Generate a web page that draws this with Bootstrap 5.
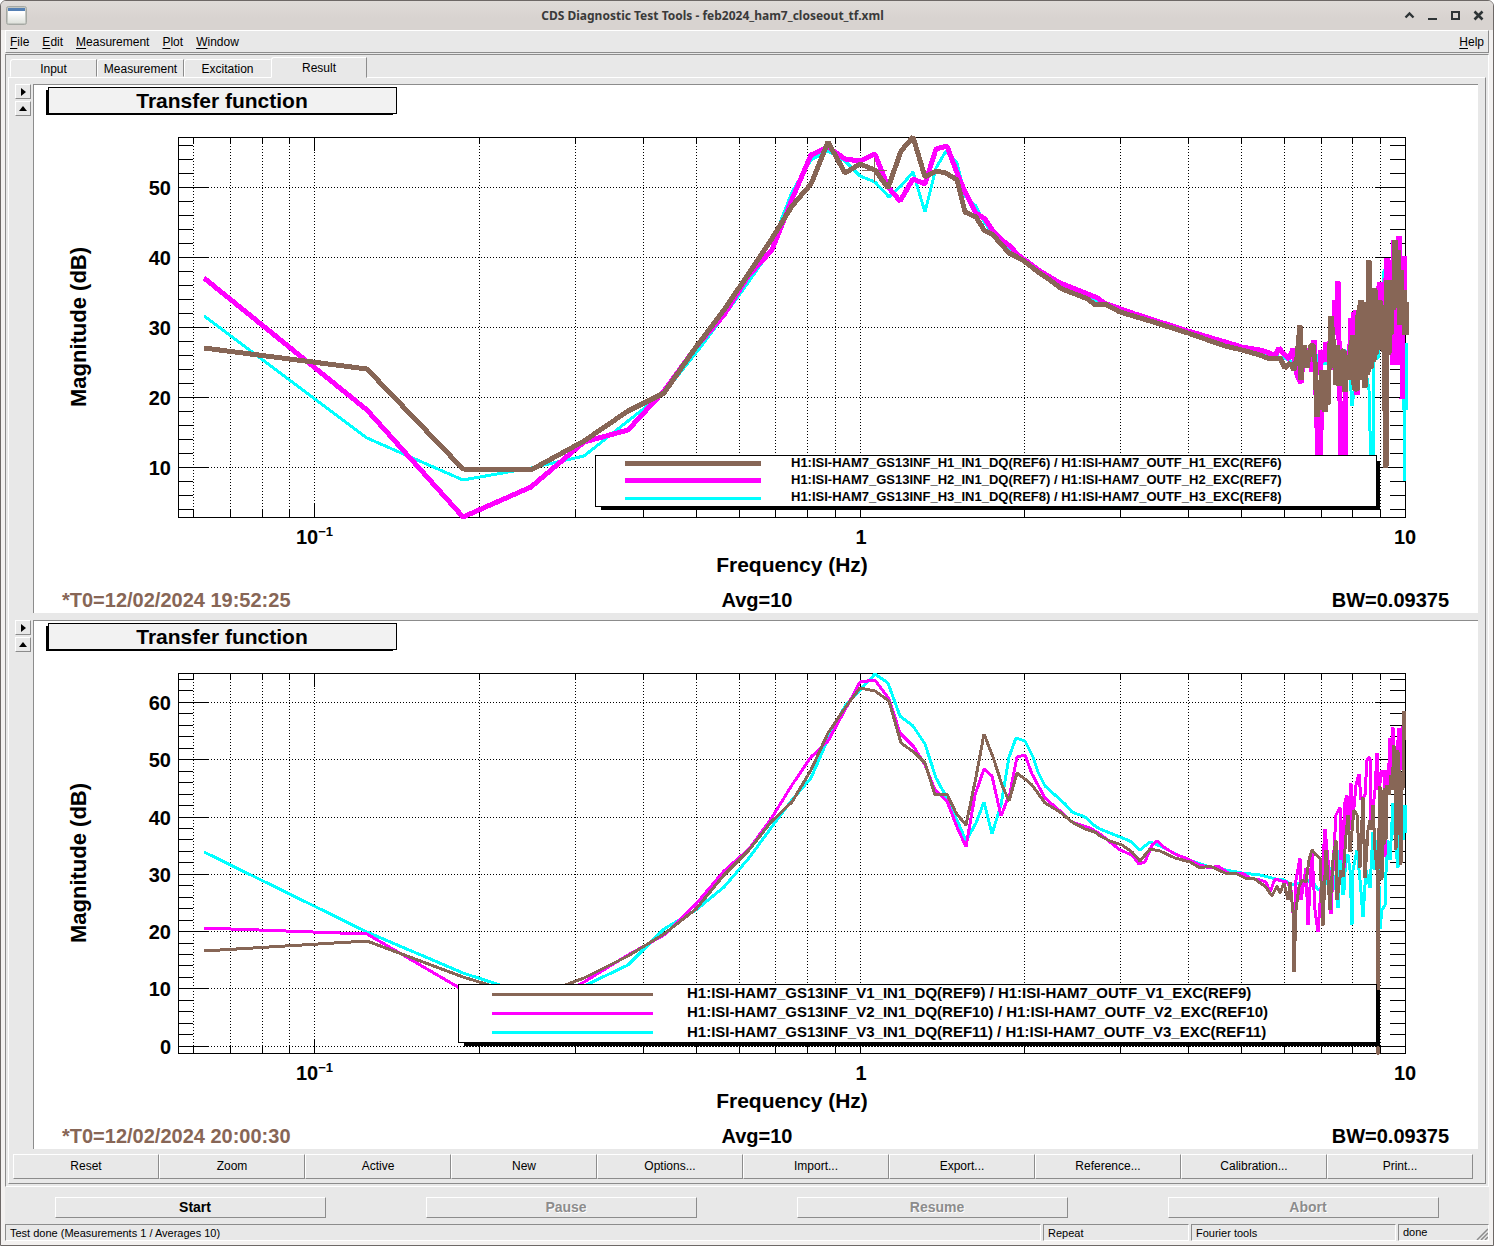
<!DOCTYPE html>
<html lang="en">
<head>
<meta charset="utf-8">
<meta name="viewport" content="width=device-width, initial-scale=1">
<title>CDS Diagnostic Test Tools</title>
<link rel="stylesheet" href="https://cdn.jsdelivr.net/npm/bootstrap@5.3.0/dist/css/bootstrap.min.css">
<style>
:root{--face:#e8e8e8;--lo:#8c8c8c;--hi:#fff}
body{font:12px/16px "Liberation Sans",Arial,sans-serif;color:#000;background:#fff}
.app-window{min-height:100vh;border:1px solid #6d6866;border-radius:6px 6px 0 0;background:#f3f1f0;overflow:hidden}
.title-bar{height:29px;background:linear-gradient(#dfdbd8,#d8d3d0 60%);padding:0 3px 0 5px;font:bold 12px/16px "Noto Sans",sans-serif;color:#3a3a3a}
.title-bar button{width:23px;height:23px;border:0;background:none;padding:0;display:grid;place-items:center}
.client{margin:0 4px 4px;background:var(--face)}
.raised{border:1px solid;border-color:var(--hi) var(--lo) var(--lo) var(--hi)}
.sunken{border:1px solid;border-color:var(--lo) var(--hi) var(--hi) var(--lo)}
.menu-row{height:23px;padding:0 4px;gap:13px}
.menu-row a{color:#000;text-decoration:none;white-space:nowrap}
.menu-row u{text-underline-offset:2px}
.work{margin-top:1px;padding:2px}
.tab-strip{height:20px;padding-left:2px;position:relative;align-items:flex-end}
.tab-strip .nav-link{border:1px solid;border-color:var(--hi) var(--lo) transparent var(--hi);border-radius:3px 0 0 0;background:var(--face);color:#000;padding:0;height:18px;width:87px;line-height:18px}
.tab-strip .nav-link.active{height:21px;width:96px;line-height:18px;border-color:var(--hi) var(--lo) var(--face) var(--hi);background:var(--face);color:#000;margin-bottom:-1px}
.tab-strip .nav-link.third{border-right-color:transparent}
.page{padding:6px 7px 4px 4px}
.plot-row{margin-bottom:7px}
.side{width:20px;padding-left:2px;gap:2px}
.side button{width:16px;height:15px;padding:0;background:var(--face);display:grid;place-items:center}
.plot-box{border-top:1px solid var(--lo);border-left:1px solid var(--lo);background:#fff;min-width:0}
.plot-box svg{display:block;width:100%;height:auto}
.plot-box text{font-family:"Liberation Sans",Arial,sans-serif;font-weight:bold;font-size:20px}
.plot-box .t21{font-size:21px}
.plot-box .t22{font-size:22px}
.plot-box .t15{font-size:15px}
.plot-box .t13{font-size:13px}
.plot-box .sup{font-size:13px}
.crisp{shape-rendering:crispEdges}
.curve{fill:none;stroke-linejoin:bevel;shape-rendering:crispEdges}
.tool-row{margin:-2px 5px 0 0}
.tool-row button{height:25px;padding:0 0 2px;background:var(--face);flex:1 1 0;color:#000}
.run-row{padding:10px 0 6px}
.run-row div{flex:1 1 0;padding:0 50px}
.run-row button{width:100%;height:21px;padding:0 0 0 9px;background:var(--face);font-weight:bold;font-size:14px;line-height:17px;color:#000}
.run-row button:disabled{color:#8c8c8c;text-shadow:1px 1px #fff}
.status-row{gap:2px;font-size:11px;line-height:16px;height:17px}
.status-row div{padding-left:4px;white-space:nowrap;overflow:hidden}
.w-rep{width:146px}.w-tool{width:205px}.w-done{width:91px}
</style>
<script src="https://cdn.jsdelivr.net/npm/bootstrap@5.3.0/dist/js/bootstrap.bundle.min.js"></script>
</head>
<body>
<div class="app-window d-flex flex-column">
  <header class="title-bar d-flex align-items-center">
    <svg width="21" height="19" viewBox="0 0 21 19"><defs><linearGradient id="wi" x2="0" y2="1"><stop offset=".3" stop-color="#fff"/><stop offset="1" stop-color="#dfe2dc"/></linearGradient></defs><rect x=".5" y=".5" width="20" height="18" rx="2" fill="#c4c7c2" stroke="#a5a8a3"/><rect x="2" y="2" width="17" height="15" fill="url(#wi)"/><rect x="2" y="2" width="17" height="3" fill="#5580b4"/></svg>
    <div class="flex-grow-1 text-center">CDS Diagnostic Test Tools - feb2024_ham7_closeout_tf.xml</div>
    <button type="button" aria-label="Shade"><svg width="11" height="11" fill="none" stroke="#2e3436" stroke-width="2.4"><path d="M1.500 7.500 5.500 3.500 9.500 7.500"/></svg></button>
    <button type="button" aria-label="Minimize"><svg width="11" height="11"><path fill="#2e3436" d="M1 8h9v2H1z"/></svg></button>
    <button type="button" aria-label="Maximize"><svg width="11" height="11"><path fill="none" stroke="#2e3436" stroke-width="2" d="M2 2h7v7H2z"/></svg></button>
    <button type="button" aria-label="Close"><svg width="11" height="11"><path stroke="#2e3436" stroke-width="2.600" d="M1.500 1.500 9.500 9.500M9.500 1.500 1.500 9.500"/></svg></button>
  </header>
  <div class="client">
    <nav class="menu-row raised d-flex align-items-center">
      <a href="#"><u>F</u>ile</a><a href="#"><u>E</u>dit</a><a href="#"><u>M</u>easurement</a><a href="#"><u>P</u>lot</a><a href="#"><u>W</u>indow</a><a href="#" class="ms-auto"><u>H</u>elp</a>
    </nav>
    <main class="work sunken">
      <div class="tab-strip nav d-flex" role="tablist">
        <button class="nav-link" type="button" role="tab">Input</button>
        <button class="nav-link" type="button" role="tab">Measurement</button>
        <button class="nav-link third" type="button" role="tab">Excitation</button>
        <button class="nav-link active" type="button" role="tab" aria-selected="true">Result</button>
      </div>
      <section class="page raised">
        <div class="plot-row d-flex">
          <div class="side d-flex flex-column">
            <button class="raised" type="button" aria-label="Options"><svg width="5" height="8"><path d="M0 0 5 4 0 8z"/></svg></button>
            <button class="raised" type="button" aria-label="Collapse"><svg width="8" height="5"><path d="M0 5 4 0 8 5z"/></svg></button>
          </div>
          <div class="plot-box flex-grow-1">
            <svg viewBox="34 85 1444 528" role="img" aria-label="Transfer function, horizontal">
              <g class="crisp"><path d="M46 90h347v25H46z"/><rect x="48.500" y="87.500" width="348" height="26" fill="#f2f2f2" stroke="#000"/></g>
              <text class="t21" x="222" y="108" text-anchor="middle">Transfer function</text>
              <g class="crisp axes" data-top="137" data-bottom="517" data-zero="537.500" data-db="7" data-max="56"></g>
              <polyline class="curve" stroke="#0ff" stroke-width="3" points="204,316 367,438 463,480 531,468 584,456 628,421 664,393 696,353 724,316 740,294 771,250 778,228 792,192 811,160 828,151 845,161 860,176 875,182 889,197 901,186 913,172 925,212 936,168 946,151 957,163 965,196 976,206 984,222 993,234 1009,250 1025,261 1050,277 1075,291 1098,301 1135,316 1188,332 1242,349 1260,352 1290,360 1300,378 1303,360 1316,370 1317,358 1320,352 1325,365 1328,345 1332,365 1337,352 1345,350 1350,375 1352,406 1356,380 1359,335 1364,360 1369,390 1371,470 1373,470 1374,360 1378,358 1381,330 1384,271 1388,265 1393,275 1396,320 1398,335 1401,300 1404,410 1404,481 1406,343 1406,410"/>
              <polyline class="curve" stroke="#f0f" stroke-width="5" points="204,278 367,410 463,517 531,487 584,442 628,430 664,391 696,347 724,315 749,275 772,250 782,225 792,199 811,155 828,147 845,159 860,161 875,154 888,187 900,201 913,179 925,184 936,149 947,146 957,173 965,192 976,213 985,219 993,231 1002,240 1010,246 1017,254 1025,260 1040,271 1060,283 1098,298 1104,303 1135,314 1188,331 1242,347 1260,350 1267,352 1275,356 1279,348 1284,354 1289,359 1293,349 1297,375 1301,383 1304,350 1306,358 1309,349 1312,372 1314,340 1316,395 1318,460 1320,460 1322,400 1320,350 1324,362 1326,342 1328,350 1331,370 1332,318 1334,330 1335,300 1336,335 1338,281 1339,340 1341,460 1345,460 1346,380 1349,370 1351,318 1352,370 1354,312 1355,375 1356,310 1357,395 1360,350 1364,315 1368,330 1372,345 1376,300 1380,282 1383,340 1387,258 1389,330 1391,260 1393,365 1393,240 1395,350 1397,240 1398,365 1399,236 1402,300 1402,399 1404,256 1405,292"/>
              <polyline class="curve" stroke="#876656" stroke-width="5" points="204,348 367,369 463,469 531,470 584,441 628,411 664,393 696,347 724,310 749,273 771,240 792,206 811,184 828,142 845,173 860,164 875,170 888,188 901,151 913,137 925,177 936,171 946,173 957,180 965,212 976,217 984,230 993,235 1001,244 1009,253 1017,257 1024,261 1038,272 1050,280 1062,289 1075,294 1088,299 1095,305 1105,304 1120,312 1150,321 1188,333 1205,339 1225,346 1242,350 1260,355 1267,358 1275,358 1280,358 1285,368 1290,363 1294,370 1297,357 1300,325 1301,380 1304,345 1307,368 1311,345 1313,345 1315,362 1317,417 1319,380 1321,410 1322,370 1325,412 1325,370 1328,405 1329,370 1331,316 1334,350 1336,385 1337,345 1339,386 1342,352 1344,350 1345,392 1348,355 1350,380 1351,345 1353,335 1353,380 1355,390 1358,388 1357,320 1361,300 1361,375 1362,380 1364,302 1365,388 1367,310 1368,375 1369,260 1371,369 1373,300 1374,362 1375,288 1376,355 1377,300 1379,345 1380,300 1381,350 1383,305 1384,352 1386,468 1387,280 1389,355 1390,290 1391,335 1392,280 1394,310 1395,240 1397,305 1398,250 1400,325 1401,270 1403,325 1404,290 1404,335 1406,302 1406,335"/>
              <path class="crisp" stroke="#876656" d="M862 151.500m0 19h25M874.500 158v24"/>
              <g class="crisp"><path d="M601 461h779v49H601z"/><rect x="595.500" y="455.500" width="781" height="51" fill="#fff" stroke="#000"/>
                <path stroke="#876656" stroke-width="5" d="M625 463.500h136"/><path stroke="#f0f" stroke-width="5" d="M625 480.500h136"/><path stroke="#0ff" stroke-width="3" d="M625 498.500h136"/></g>
              <text class="t13" x="791" y="467">H1:ISI-HAM7_GS13INF_H1_IN1_DQ(REF6) / H1:ISI-HAM7_OUTF_H1_EXC(REF6)</text>
              <text class="t13" x="791" y="484">H1:ISI-HAM7_GS13INF_H2_IN1_DQ(REF7) / H1:ISI-HAM7_OUTF_H2_EXC(REF7)</text>
              <text class="t13" x="791" y="501">H1:ISI-HAM7_GS13INF_H3_IN1_DQ(REF8) / H1:ISI-HAM7_OUTF_H3_EXC(REF8)</text>
              <g text-anchor="end"><text x="171" y="195">50</text><text x="171" y="265">40</text><text x="171" y="335">30</text><text x="171" y="405">20</text><text x="171" y="475">10</text></g>
              <text class="t22" transform="translate(86 327) rotate(-90)" text-anchor="middle">Magnitude (dB)</text>
              <text x="296" y="544">10<tspan class="sup" dy="-8">−1</tspan></text>
              <text x="861" y="544" text-anchor="middle">1</text><text x="1405" y="544" text-anchor="middle">10</text>
              <text class="t21" x="792" y="572" text-anchor="middle">Frequency (Hz)</text>
              <text x="62" y="607" fill="#876656">*T0=12/02/2024 19:52:25</text>
              <text x="757" y="607" text-anchor="middle">Avg=10</text>
              <text x="1449" y="607" text-anchor="end">BW=0.09375</text>
            </svg>
          </div>
        </div>
        <div class="plot-row d-flex">
          <div class="side d-flex flex-column">
            <button class="raised" type="button" aria-label="Options"><svg width="5" height="8"><path d="M0 0 5 4 0 8z"/></svg></button>
            <button class="raised" type="button" aria-label="Collapse"><svg width="8" height="5"><path d="M0 5 4 0 8 5z"/></svg></button>
          </div>
          <div class="plot-box flex-grow-1">
            <svg viewBox="34 621 1444 528" role="img" aria-label="Transfer function, vertical">
              <g class="crisp"><path d="M46 626h347v25H46z"/><rect x="48.500" y="623.500" width="348" height="26" fill="#f2f2f2" stroke="#000"/></g>
              <text class="t21" x="222" y="644" text-anchor="middle">Transfer function</text>
              <g class="crisp axes" data-top="673" data-bottom="1053" data-zero="1046.200" data-db="5.730" data-max="64"></g>
              <polyline class="curve" stroke="#0ff" stroke-width="3" points="204,852 367,932 463,973 500,985 531,995 584,986 628,965 664,929 696,910 724,887 749,858 771,828 792,800 811,778 828,739 845,706 860,690 875,674 888,683 900,716 913,726 925,744 936,778 947,798 957,820 966,841 976,823 984,802 992,834 1001,805 1009,757 1016,738 1025,741 1033,757 1038,772 1045,786 1065,804 1072,812 1085,817 1095,826 1100,829 1115,835 1130,841 1140,850 1150,842 1160,846 1188,860 1210,867 1242,873 1260,875 1268,877 1276,879 1284,880 1292,885 1305,882 1312,880 1318,890 1325,885 1330,868 1335,880 1338,908 1340,850 1343,895 1344,890 1346,855 1348,855 1350,870 1352,925 1353,870 1357,850 1360,880 1363,917 1366,870 1370,888 1373,832 1375,870 1378,840 1380,929 1382,910 1385,905 1387,840 1390,860 1393,803 1396,850 1398,868 1401,800 1403,840 1405,805 1405,833"/>
              <polyline class="curve" stroke="#f0f" stroke-width="3" points="204,928 367,934 463,990 531,1010 584,982 628,955 664,935 696,904 724,871 749,849 771,819 792,785 811,757 828,741 845,710 860,682 875,680 889,699 900,733 914,747 925,765 935,790 947,801 957,827 966,847 975,795 984,769 992,776 1001,816 1010,793 1017,757 1025,755 1032,774 1045,798 1060,811 1072,822 1090,828 1100,834 1110,842 1120,850 1132,855 1139,864 1145,862 1152,845 1157,841 1165,848 1175,854 1188,859 1200,865 1210,868 1218,866 1230,874 1242,873 1250,878 1260,880 1266,882 1270,892 1275,879 1282,881 1287,882 1291,890 1294,925 1296,880 1300,858 1301,900 1306,868 1308,925 1312,850 1315,910 1318,932 1322,875 1325,829 1329,870 1331,914 1334,850 1336,815 1340,807 1341,860 1343,820 1344,870 1345,802 1347,795 1348,830 1351,783 1352,830 1356,785 1359,774 1361,800 1365,795 1367,760 1370,757 1371,825 1375,790 1377,753 1379,790 1382,770 1384,775 1385,857 1386,770 1388,790 1390,738 1391,785 1392,740 1393,727 1394,780 1396,780 1398,740 1399,728 1401,770 1403,726 1405,732"/>
              <polyline class="curve" stroke="#876656" stroke-width="3" points="204,951 367,941 463,977 531,998 584,978 628,956 664,934 696,909 724,875 749,850 771,822 792,802 811,770 828,733 845,708 860,688 875,691 889,701 901,743 915,753 925,763 935,795 947,794 956,813 966,825 976,777 984,734 993,757 1002,785 1009,801 1017,773 1025,779 1032,785 1045,803 1060,812 1072,822 1085,829 1095,832 1100,836 1110,841 1122,845 1132,852 1140,861 1150,849 1160,851 1175,858 1190,862 1200,868 1210,866 1225,873 1235,873 1245,878 1255,879 1260,883 1265,886 1272,896 1277,886 1280,893 1284,883 1288,900 1290,882 1293,912 1294,972 1296,910 1299,887 1302,880 1306,882 1309,860 1312,850 1316,855 1320,858 1323,926 1326,850 1330,910 1333,860 1336,840 1337,900 1341,870 1343,877 1346,835 1348,815 1350,852 1354,810 1357,815 1360,868 1363,797 1365,878 1368,830 1370,820 1372,830 1373,805 1375,850 1377,870 1377,1053 1379,1053 1378,870 1380,786 1382,880 1383,790 1384,845 1385,788 1386,840 1387,785 1389,795 1391,775 1392,790 1394,745 1395,790 1396,850 1397,780 1398,750 1399,835 1400,770 1401,865 1402,780 1403,790 1404,711 1405,740"/>
              <g class="crisp"><path d="M464 990h916v56H464z"/><path stroke="#000" stroke-dasharray="1 2" d="M464 1046.500h916"/><rect x="458.500" y="984.500" width="918" height="58" fill="#fff" stroke="#000"/>
                <path stroke="#876656" stroke-width="3" d="M492 994.500h161"/><path stroke="#f0f" stroke-width="3" d="M492 1013.500h161"/><path stroke="#0ff" stroke-width="3" d="M492 1032.500h161"/></g>
              <text class="t15" x="687" y="998">H1:ISI-HAM7_GS13INF_V1_IN1_DQ(REF9) / H1:ISI-HAM7_OUTF_V1_EXC(REF9)</text>
              <text class="t15" x="687" y="1017">H1:ISI-HAM7_GS13INF_V2_IN1_DQ(REF10) / H1:ISI-HAM7_OUTF_V2_EXC(REF10)</text>
              <text class="t15" x="687" y="1037">H1:ISI-HAM7_GS13INF_V3_IN1_DQ(REF11) / H1:ISI-HAM7_OUTF_V3_EXC(REF11)</text>
              <g text-anchor="end"><text x="171" y="710">60</text><text x="171" y="767">50</text><text x="171" y="825">40</text><text x="171" y="882">30</text><text x="171" y="939">20</text><text x="171" y="996">10</text><text x="171" y="1054">0</text></g>
              <text class="t22" transform="translate(86 863) rotate(-90)" text-anchor="middle">Magnitude (dB)</text>
              <text x="296" y="1080">10<tspan class="sup" dy="-8">−1</tspan></text>
              <text x="861" y="1080" text-anchor="middle">1</text><text x="1405" y="1080" text-anchor="middle">10</text>
              <text class="t21" x="792" y="1108" text-anchor="middle">Frequency (Hz)</text>
              <text x="62" y="1143" fill="#876656">*T0=12/02/2024 20:00:30</text>
              <text x="757" y="1143" text-anchor="middle">Avg=10</text>
              <text x="1449" y="1143" text-anchor="end">BW=0.09375</text>
            </svg>
          </div>
        </div>
        <div class="tool-row d-flex">
          <button class="raised" type="button">Reset</button><button class="raised" type="button">Zoom</button><button class="raised" type="button">Active</button><button class="raised" type="button">New</button><button class="raised" type="button">Options...</button><button class="raised" type="button">Import...</button><button class="raised" type="button">Export...</button><button class="raised" type="button">Reference...</button><button class="raised" type="button">Calibration...</button><button class="raised" type="button">Print...</button>
        </div>
      </section>
    </main>
    <div class="run-row d-flex">
      <div><button class="raised" type="button">Start</button></div>
      <div><button class="raised" type="button" disabled>Pause</button></div>
      <div><button class="raised" type="button" disabled>Resume</button></div>
      <div><button class="raised" type="button" disabled>Abort</button></div>
    </div>
    <footer class="status-row d-flex">
      <div class="sunken flex-grow-1">Test done (Measurements 1 / Averages 10)</div>
      <div class="sunken w-rep">Repeat</div>
      <div class="sunken w-tool">Fourier tools</div>
      <div class="sunken w-done d-flex justify-content-between align-items-end"><span>done</span><svg width="12" height="12"><path stroke="#8c8c8c" stroke-width="1.500" d="M1 12 12 1M5 12 12 5M9 12 12 9"/></svg></div>
    </footer>
  </div>
</div>
<script>
// Log-frequency grid, frame and tick marks for each plot
document.querySelectorAll('.axes').forEach(g => {
  const L = 178, R = 1405, d = g.dataset, T = +d.top, B = +d.bottom;
  const snap = v => Math.floor(v) + 0.5;
  let grid = '', tick = `M${L}.5 ${T}.5H${R}.5V${B}.5H${L}.5Z`;
  for (const dec of [-2, -1, 0]) for (let m = 1; m < 10; m++) {
    const x = snap(860.3 + 545.4 * (dec + Math.log10(m)));
    if (x < L || x > R) continue;
    const n = m === 1 ? 14 : 7;
    grid += `M${x} ${T}V${B}`;
    tick += `M${x} ${T}v${n}M${x} ${B}v${-n}`;
  }
  for (let v = 0; v <= +d.max; v += 2) {
    const y = snap(d.zero - v * d.db);
    if (y > B) continue;
    const major = v % 10 === 0, n = major ? 30 : 15;
    if (major) grid += `M${L} ${y}H${R}`;
    tick += `M${L} ${y}h${n}M${R} ${y}h${-n}`;
  }
  g.innerHTML = `<path fill="none" stroke="#000" stroke-dasharray="1 2" d="${grid}"/><path fill="none" stroke="#000" d="${tick}"/>`;
});
</script>
</body>
</html>
